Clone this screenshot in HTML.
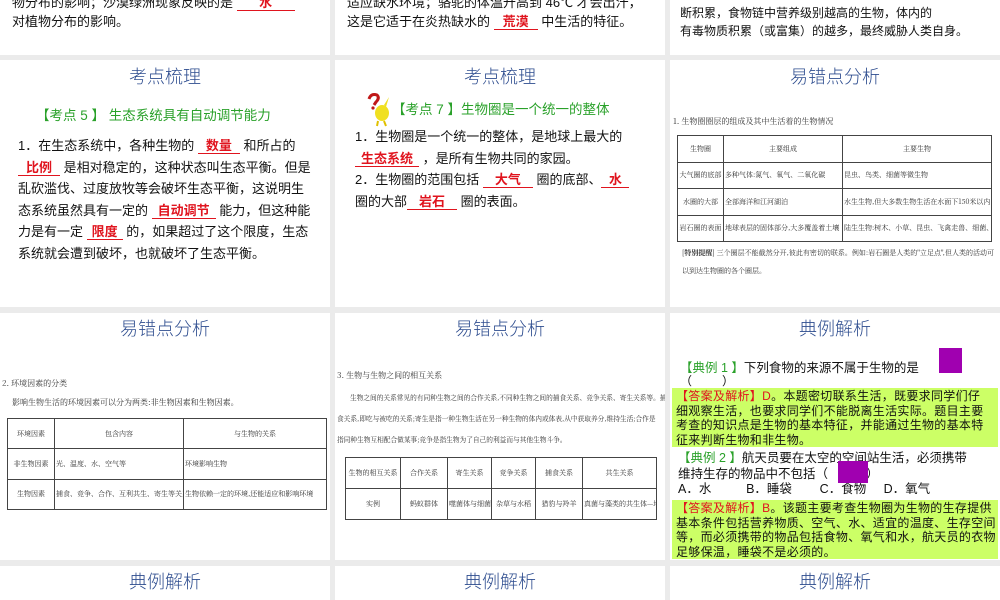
<!DOCTYPE html>
<html><head><meta charset="utf-8"><style>
*{margin:0;padding:0;box-sizing:border-box}
body{width:1000px;height:600px;background:#ebebeb;position:relative;overflow:hidden;font-family:"Liberation Sans","Noto Sans CJK SC",sans-serif;color:#111}
.p{position:absolute;background:#fff;overflow:hidden}
.a{position:absolute;white-space:nowrap}
.t{position:absolute;left:0;right:0;text-align:center;font-size:18px;color:#2e4d8f;font-family:"Noto Sans CJK SC",sans-serif;font-weight:300}
.r{color:#e0141e;font-weight:bold}
.u{display:inline-block;border-bottom:1px solid #e0141e;text-align:center;line-height:14px}
.g{color:#2aa12a}
.body{font-size:13px;line-height:21.5px}
table{border-collapse:collapse;position:absolute;font-family:"Noto Serif CJK SC",serif;font-size:7px;color:#333;table-layout:fixed;border:1.5px solid #222}
td{border:1px solid #444;text-align:center;white-space:nowrap;overflow:hidden;padding:0 1px}
td.l{text-align:left}
.s{font-family:"Noto Serif CJK SC",serif;font-size:7.5px;color:#333;white-space:nowrap;position:absolute}
.box{position:absolute;left:2px;right:2px;background:#ccff66;font-size:12px;line-height:14.5px;padding:1px 4px;white-space:nowrap;letter-spacing:0.3px}
.pu{position:absolute;background:#a000b0}
</style></head><body>

<div class="p" style="left:0;top:0;width:330px;height:55px">
<div class="a body" style="left:12px;top:-8px">物分布的影响；沙漠绿洲现象反映的是 <span class="u r" style="width:58px">水</span></div>
<div class="a body" style="left:12px;top:11px">对植物分布的影响。</div>
</div>
<div class="p" style="left:335px;top:0;width:330px;height:55px">
<div class="a body" style="left:12px;top:-8px">适应缺水环境；骆驼的体温升高到 46℃ 才会出汗，</div>
<div class="a body" style="left:12px;top:11px">这是它适于在炎热缺水的 <span class="u r" style="width:44px">荒漠</span> 中生活的特征。</div>
</div>
<div class="p" style="left:670px;top:0;width:330px;height:55px">
<div class="a body" style="left:10px;top:3px;font-size:12px">断积累，食物链中营养级别越高的生物，体内的</div>
<div class="a body" style="left:10px;top:21px;font-size:12px">有毒物质积累（或富集）的越多，最终威胁人类自身。</div>
</div>

<div class="p" style="left:0;top:60px;width:330px;height:247px">
<div class="t" style="top:3px">考点梳理</div>
<div class="a g" style="left:36px;top:44px;font-size:13.5px">【考点 5 】 生态系统具有自动调节能力</div>
<div class="body" style="position:absolute;left:18px;top:75px;width:300px">
1．在生态系统中，各种生物的 <span class="u r" style="width:42px">数量</span> 和所占的<br>
<span class="u r" style="width:42px">比例</span> 是相对稳定的，这种状态叫生态平衡。但是<br>
乱砍滥伐、过度放牧等会破坏生态平衡，这说明生<br>
态系统虽然具有一定的 <span class="u r" style="width:64px">自动调节</span> 能力，但这种能<br>
力是有一定 <span class="u r" style="width:36px">限度</span> 的，如果超过了这个限度，生态<br>
系统就会遭到破坏，也就破坏了生态平衡。</div>
</div>
<div class="p" style="left:335px;top:60px;width:330px;height:247px">
<div class="t" style="top:3px">考点梳理</div>
<svg class="a" style="left:30px;top:33px" width="30" height="34" viewBox="0 0 30 34"><path d="M4 6 Q6 0 12 2 Q15 5 11 9 L9 12" stroke="#c01818" stroke-width="3" fill="none"/><circle cx="8" cy="15" r="1.6" fill="#c01818"/><ellipse cx="17" cy="20" rx="7" ry="8" fill="#f0e020"/><path d="M19 12 L24 4 L21 14Z" fill="#f0e020"/><path d="M13 28 L12 33 M19 28 L21 33" stroke="#e0c000" stroke-width="2"/></svg>
<div class="a g" style="left:57px;top:38px;font-size:13.5px">【考点 7 】生物圈是一个统一的整体</div>
<div class="body" style="position:absolute;left:20px;top:66px;width:300px">
1．生物圈是一个统一的整体，是地球上最大的<br>
<span class="u r" style="width:64px">生态系统</span> ，是所有生物共同的家园。<br>
2．生物圈的范围包括 <span class="u r" style="width:50px">大气</span> 圈的底部、<span class="u r" style="width:28px">水</span><br>
圈的大部<span class="u r" style="width:50px">岩石</span> 圈的表面。</div>
</div>
<div class="p" style="left:670px;top:60px;width:330px;height:247px">
<div class="t" style="top:3px">易错点分析</div>
<div class="s" style="left:3px;top:56px;font-size:8px">1. 生物圈圈层的组成及其中生活着的生物情况</div>
<table style="left:7px;top:75px;width:315px;height:107px">
<tr><td style="width:46px">生物圈</td><td style="width:119px">主要组成</td><td>主要生物</td></tr>
<tr><td>大气圈的底部</td><td class="l">多种气体:氮气、氧气、二氧化碳</td><td class="l">昆虫、鸟类、细菌等微生物</td></tr>
<tr><td>水圈的大部</td><td class="l">全部海洋和江河湖泊</td><td class="l">水生生物,但大多数生物生活在水面下150米以内的水层中</td></tr>
<tr><td>岩石圈的表面</td><td class="l">地球表层的固体部分,大多覆盖着土壤</td><td class="l">陆生生物:树木、小草、昆虫、飞禽走兽、细菌、真菌</td></tr>
</table>
<div class="s" style="left:12px;top:188px;font-size:7px">[<b>特别提醒</b>] 三个圈层不能截然分开,彼此有密切的联系。例如:岩石圈是人类的"立足点",但人类的活动可</div>
<div class="s" style="left:12px;top:206px;font-size:7px">以到达生物圈的各个圈层。</div>
</div>

<div class="p" style="left:0;top:313px;width:330px;height:247px">
<div class="t" style="top:2px">易错点分析</div>
<div class="s" style="left:2px;top:65px;font-size:8px">2. 环境因素的分类</div>
<div class="s" style="left:12px;top:84px;font-size:8px">影响生物生活的环境因素可以分为两类:非生物因素和生物因素。</div>
<table style="left:7px;top:105px;width:320px;height:92px">
<tr><td style="width:47px">环境因素</td><td style="width:129px">包含内容</td><td>与生物的关系</td></tr>
<tr><td>非生物因素</td><td class="l">光、温度、水、空气等</td><td class="l">环境影响生物</td></tr>
<tr><td>生物因素</td><td class="l">捕食、竞争、合作、互利共生、寄生等关系的生物</td><td class="l">生物依赖一定的环境,还能适应和影响环境</td></tr>
</table>
</div>
<div class="p" style="left:335px;top:313px;width:330px;height:247px">
<div class="t" style="top:2px">易错点分析</div>
<div class="s" style="left:2px;top:57px;font-size:8px">3. 生物与生物之间的相互关系</div>
<div class="s" style="left:15px;top:79px;font-size:6.7px">生物之间的关系常见的有同种生物之间的合作关系,不同种生物之间的捕食关系、竞争关系、寄生关系等。捕</div>
<div class="s" style="left:2px;top:100px;font-size:6.7px">食关系,即吃与被吃的关系;寄生是指一种生物生活在另一种生物的体内或体表,从中获取养分,维持生活;合作是</div>
<div class="s" style="left:2px;top:121px;font-size:6.7px">指同种生物互相配合做某事;竞争是指生物为了自己的利益而与其他生物斗争。</div>
<table style="left:10px;top:144px;width:312px;height:63px">
<tr><td style="width:55px">生物的相互关系</td><td style="width:47px">合作关系</td><td style="width:44px">寄生关系</td><td style="width:44px">竞争关系</td><td style="width:47px">捕食关系</td><td>共生关系</td></tr>
<tr><td>实例</td><td>蚂蚁群体</td><td>噬菌体与细菌</td><td>杂草与水稻</td><td>猎豹与羚羊</td><td>真菌与藻类的共生体—地衣</td></tr>
</table>
</div>
<div class="p" style="left:670px;top:313px;width:330px;height:247px">
<div class="t" style="top:2px">典例解析</div>
<div class="a" style="left:10px;top:44px;font-size:12.5px"><span class="g">【典例 1 】</span>下列食物的来源不属于生物的是</div>
<div class="a" style="left:10px;top:59px;font-size:12px">（&nbsp;&nbsp;&nbsp;&nbsp;&nbsp;&nbsp;&nbsp;&nbsp;&nbsp;）</div>
<div class="pu" style="left:269px;top:35px;width:23px;height:25px"></div>
<div class="box" style="top:75px;height:59px"><span style="color:#e0141e">【答案及解析】D</span>。本题密切联系生活，既要求同学们仔<br>细观察生活，也要求同学们不能脱离生活实际。题目主要<br>考查的知识点是生物的基本特征，并能通过生物的基本特<br>征来判断生物和非生物。</div>
<div class="a" style="left:8px;top:138px;font-size:12.5px;line-height:15.5px"><span class="g">【典例 2 】</span>航天员要在太空的空间站生活，必须携带<br>维持生存的物品中不包括（&nbsp;&nbsp;&nbsp;&nbsp;&nbsp;&nbsp;&nbsp;&nbsp;&nbsp;&nbsp;&nbsp;）<br>A．水&nbsp;&nbsp;&nbsp;&nbsp;&nbsp;&nbsp;&nbsp;&nbsp;&nbsp;&nbsp;B．睡袋&nbsp;&nbsp;&nbsp;&nbsp;&nbsp;&nbsp;&nbsp;&nbsp;C．食物&nbsp;&nbsp;&nbsp;&nbsp;&nbsp;D．氧气</div>
<div class="pu" style="left:168px;top:148px;width:30px;height:22px"></div>
<div class="box" style="top:187px;height:59px"><span style="color:#e0141e">【答案及解析】B</span>。该题主要考查生物圈为生物的生存提供<br>基本条件包括营养物质、空气、水、适宜的温度、生存空间<br>等，而必须携带的物品包括食物、氧气和水，航天员的衣物<br>足够保温，睡袋不是必须的。</div>
</div>

<div class="p" style="left:0;top:566px;width:330px;height:34px"><div class="t" style="top:2px">典例解析</div></div>
<div class="p" style="left:335px;top:566px;width:330px;height:34px"><div class="t" style="top:2px">典例解析</div></div>
<div class="p" style="left:670px;top:566px;width:330px;height:34px"><div class="t" style="top:2px">典例解析</div></div>
</body></html>
